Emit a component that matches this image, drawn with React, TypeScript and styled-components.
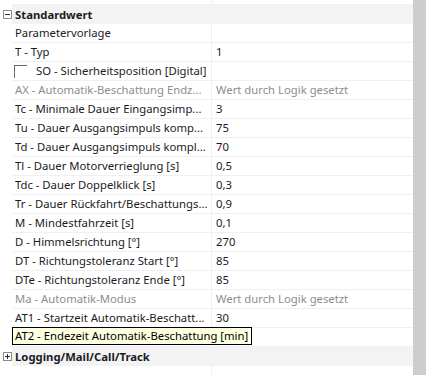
import React from "react";
import styled, { createGlobalStyle } from "styled-components";

const Global = createGlobalStyle`
  html, body { margin: 0; padding: 0; background: #ffffff; }
  body { font-family: "Noto Sans", "Open Sans", sans-serif; }
`;

const Window = styled.div`
  width: 426px;
  height: 375px;
  overflow: hidden;
  display: flex;
  background: #ffffff;
`;

const Grid = styled.div`
  width: 413px;
  display: flex;
  flex-direction: column;
  margin-top: -14px;
`;

const Scrollbar = styled.div`
  width: 13px;
  height: 375px;
  background: #cdcdcd;
`;

const Row = styled.div`
  display: grid;
  grid-template-columns: 12px 200px 1fr;
  height: 19px;
  flex: none;
`;

const Margin = styled.div`
  display: flex;
  align-items: center;
  justify-content: flex-start;
  padding-left: 3px;
  box-sizing: border-box;
`;

const NameCell = styled.div<{ $muted?: boolean }>`
  position: relative;
  box-sizing: border-box;
  border-right: 1px solid #f0f0f0;
  border-bottom: 1px solid #f0f0f0;
  padding-left: 3px;
  display: flex;
  align-items: center;
  gap: 9px;
  font-size: 11.3px;
  line-height: 18px;
  color: ${(p) => (p.$muted ? "#8d8d8d" : "#1b1b24")};
  white-space: nowrap;
`;

const NameText = styled.span`
  overflow: hidden;
  white-space: nowrap;
`;

const ValueCell = styled.div<{ $muted?: boolean }>`
  box-sizing: border-box;
  border-bottom: 1px solid #f0f0f0;
  padding-left: 4px;
  font-size: 11.3px;
  line-height: 18px;
  color: ${(p) => (p.$muted ? "#8d8d8d" : "#1b1b24")};
  white-space: nowrap;
  overflow: hidden;
`;

const CategoryCell = styled.div`
  grid-column: 2 / 4;
  background: #f3f3f3;
  padding-left: 3px;
  font-size: 11.3px;
  font-weight: 700;
  line-height: 19px;
  color: #1b1b24;
  white-space: nowrap;
`;

const Check = styled.span`
  width: 13px;
  height: 13px;
  box-sizing: border-box;
  border-top: 1px solid #6a6a6a;
  border-left: 1px solid #6a6a6a;
  flex: none;
  margin-left: -1px;
`;

const Tooltip = styled.div`
  position: absolute;
  left: 0;
  top: -1px;
  height: 18px;
  box-sizing: border-box;
  background: #ffffe1;
  border: 1px solid #000000;
  padding-left: 2px;
  padding-right: 3px;
  font-size: 11.3px;
  line-height: 16px;
  color: #000000;
  white-space: nowrap;
  z-index: 2;
`;

const Expander = ({ open }: { open: boolean }) => (
  <svg width="9" height="9" viewBox="0 0 9 9">
    <rect x="0.5" y="0.5" width="8" height="8" fill="#ffffff" stroke="#8a8a8a" />
    <line x1="2" y1="4.5" x2="7" y2="4.5" stroke="#2a2a2a" />
    {!open && <line x1="4.5" y1="2" x2="4.5" y2="7" stroke="#2a2a2a" />}
  </svg>
);

type Prop = { name: string; value?: string; muted?: boolean; check?: boolean; tooltip?: string };

const props: Prop[] = [
  { name: "Parametervorlage", value: "" },
  { name: "T - Typ", value: "1" },
  { name: "SO - Sicherheitsposition [Digital]", value: "", check: true },
  { name: "AX - Automatik-Beschattung Endz...", value: "Wert durch Logik gesetzt", muted: true },
  { name: "Tc - Minimale Dauer Eingangsimp...", value: "3" },
  { name: "Tu - Dauer Ausgangsimpuls komp...", value: "75" },
  { name: "Td - Dauer Ausgangsimpuls kompl...", value: "70" },
  { name: "Tl - Dauer Motorverrieglung [s]", value: "0,5" },
  { name: "Tdc - Dauer Doppelklick [s]", value: "0,3" },
  { name: "Tr - Dauer Rückfahrt/Beschattungs...", value: "0,9" },
  { name: "M - Mindestfahrzeit [s]", value: "0,1" },
  { name: "D - Himmelsrichtung [°]", value: "270" },
  { name: "DT - Richtungstoleranz Start [°]", value: "85" },
  { name: "DTe - Richtungstoleranz Ende [°]", value: "85" },
  { name: "Ma - Automatik-Modus", value: "Wert durch Logik gesetzt", muted: true },
  { name: "AT1 - Startzeit Automatik-Beschatt...", value: "30" },
  { name: "", value: "", tooltip: "AT2 - Endezeit Automatik-Beschattung [min]" },
];

export default function App() {
  return (
    <>
      <Global />
      <Window>
        <Grid>
          <Row>
            <Margin />
            <NameCell />
            <ValueCell />
          </Row>
          <Row>
            <Margin><Expander open /></Margin>
            <CategoryCell>Standardwert</CategoryCell>
          </Row>
          {props.map((p, i) => (
            <Row key={i}>
              <Margin />
              <NameCell $muted={p.muted}>
                {p.check && <Check />}
                {p.name && <NameText>{p.name}</NameText>}
                {p.tooltip && <Tooltip>{p.tooltip}</Tooltip>}
              </NameCell>
              <ValueCell $muted={p.muted}>{p.value}</ValueCell>
            </Row>
          ))}
          <Row>
            <Margin><Expander open={false} /></Margin>
            <CategoryCell>Logging/Mail/Call/Track</CategoryCell>
          </Row>
          <Row>
            <Margin />
            <NameCell />
            <ValueCell />
          </Row>
        </Grid>
        <Scrollbar />
      </Window>
    </>
  );
}
